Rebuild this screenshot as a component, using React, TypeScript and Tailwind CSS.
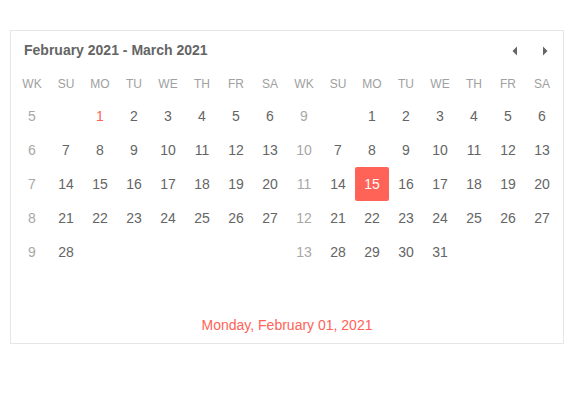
import React from 'react';

type Cell = { day?: number; wk?: number };

const headers = ['WK', 'SU', 'MO', 'TU', 'WE', 'TH', 'FR', 'SA'];

// builds the rows of one month view: week number followed by seven days
function buildMonth(firstWeekday: number, days: number, firstWeek: number): Cell[][] {
  const rows: Cell[][] = [];
  let day = 1;
  let wk = firstWeek;
  for (let r = 0; r < 6; r++) {
    const row: Cell[] = [];
    const hasDays = day <= days;
    row.push(hasDays ? { wk } : {});
    for (let c = 0; c < 7; c++) {
      if ((r === 0 && c < firstWeekday) || day > days) {
        row.push({});
      } else {
        row.push({ day });
        day++;
      }
    }
    rows.push(row);
    wk++;
  }
  return rows;
}

const february = buildMonth(1, 28, 5);
const march = buildMonth(1, 31, 9);

function MonthView({ rows, month }: { rows: Cell[][]; month: 'feb' | 'mar' }) {
  return (
    <div className="flex flex-col">
      <div className="grid grid-cols-8">
        {headers.map((h) => (
          <div key={h} className="h-[34px] pt-[3px] flex items-center justify-center text-[12px] text-[#a0a0a0]">
            {h}
          </div>
        ))}
      </div>
      {rows.map((row, r) => (
        <div key={r} className="grid grid-cols-8">
          {row.map((cell, c) => {
            if (cell.wk !== undefined) {
              return (
                <div key={c} className="h-[34px] flex items-center justify-center text-[14px] text-[#a8a8a8]">
                  {cell.wk}
                </div>
              );
            }
            if (cell.day === undefined) return <div key={c} className="h-[34px]" />;
            const selected = month === 'mar' && cell.day === 15;
            const focused = month === 'feb' && cell.day === 1;
            return (
              <div
                key={c}
                className={
                  selected
                    ? 'h-[34px] flex items-center justify-center text-[14px] text-white bg-[#ff6358] rounded-[2px]'
                    : focused
                    ? 'h-[34px] flex items-center justify-center text-[14px] text-[#ff6358]'
                    : 'h-[34px] flex items-center justify-center text-[14px] text-[#656565]'
                }
              >
                {cell.day}
              </div>
            );
          })}
        </div>
      ))}
    </div>
  );
}

export default function App() {
  return (
    <div className="w-[574px] h-[404px] bg-white pt-[30px] pl-[10px] font-['Liberation_Sans',Arial,sans-serif]">
      <div className="w-[554px] h-[314px] border border-[#e6e6e6] flex flex-col">
        <div className="h-[34px] flex items-center justify-between pl-[13px] pr-[14px] pt-[5px] text-[#656565]">
          <span className="text-[14px] font-bold">February 2021 - March 2021</span>
          <div className="flex items-center gap-[22px]">
            <svg width="8" height="10" viewBox="0 0 8 10">
              <path d="M6 0.5 L1.5 5 L6 9.5 Z" fill="#656565" />
            </svg>
            <svg width="8" height="10" viewBox="0 0 8 10">
              <path d="M2 0.5 L6.5 5 L2 9.5 Z" fill="#656565" />
            </svg>
          </div>
        </div>
        <div className="grid grid-cols-2 w-[544px] ml-[4px]">
          <MonthView rows={february} month="feb" />
          <MonthView rows={march} month="mar" />
        </div>
        <div className="flex-1 pt-[4px] flex items-center justify-center text-[14px] text-[#ff6358]">
          Monday, February 01, 2021
        </div>
      </div>
    </div>
  );
}
